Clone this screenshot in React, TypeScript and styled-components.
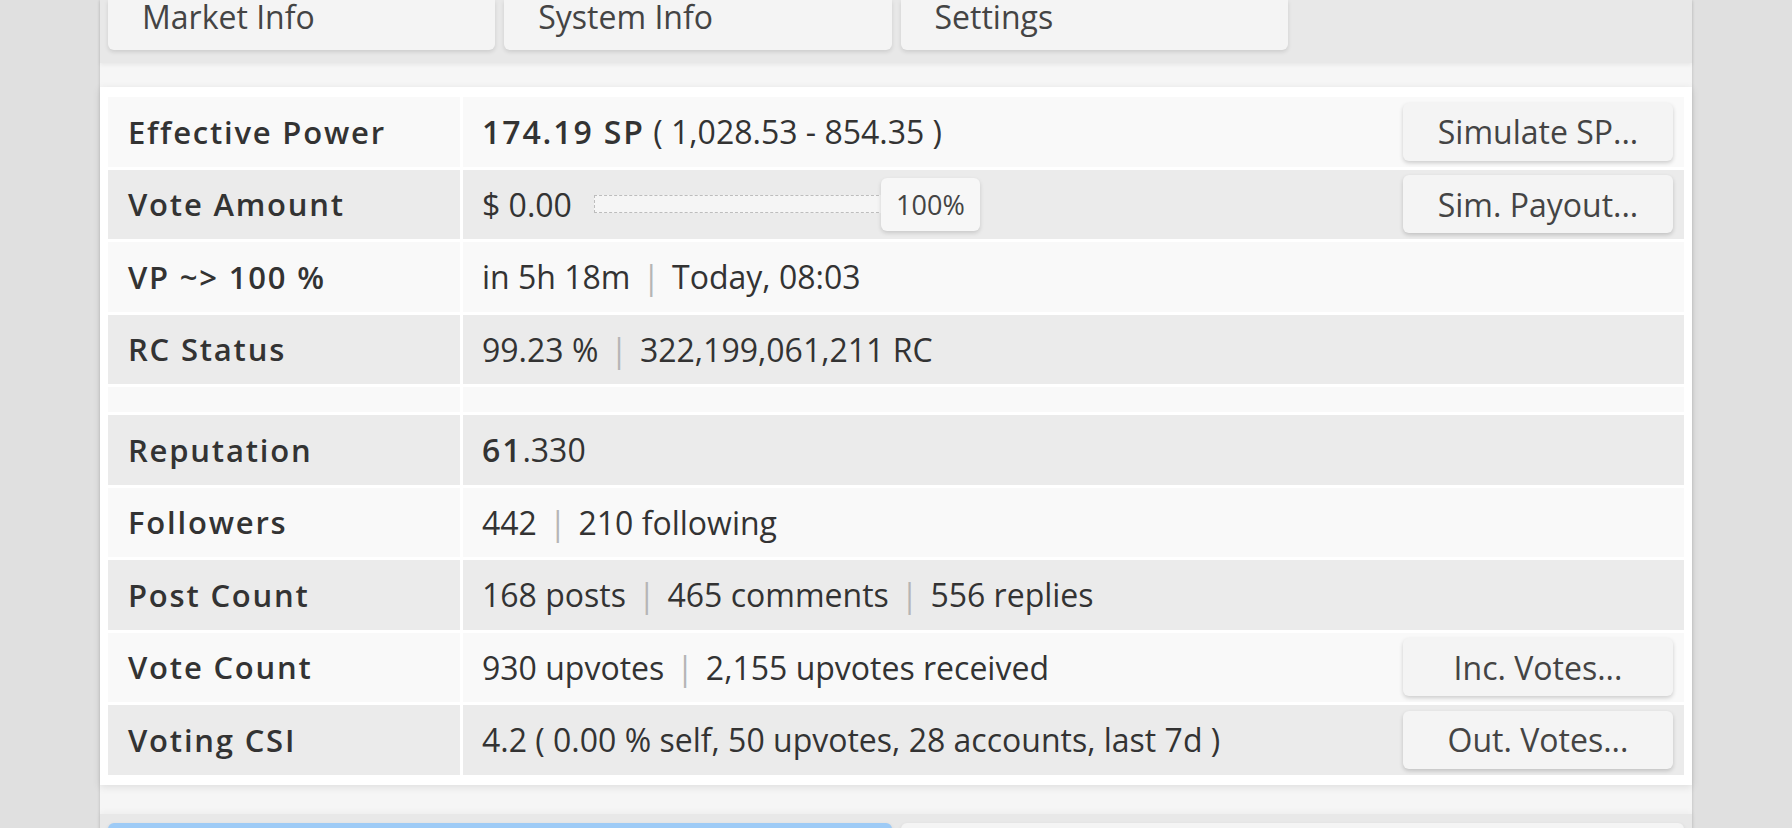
import styled, { createGlobalStyle } from "styled-components";

const GlobalStyle = createGlobalStyle`
	* { box-sizing: border-box; }
	body {
		margin: 0;
		background: #e0e0e0;
		font-family: "Open Sans", "Liberation Sans", sans-serif;
		color: #333;
		overflow: hidden;
	}
`;

const Container = styled.div`
	width: 1592px;
	min-height: 100vh;
	margin: 0 auto;
	background: #f6f6f6;
	box-shadow: 0 0 3px rgba(0, 0, 0, 0.18);
`;

const TabBar = styled.div<{ $cols: number; $top?: boolean }>`
	display: grid;
	grid-template-columns: repeat(${(p) => p.$cols}, 1fr);
	gap: 9px;
	padding: ${(p) => (p.$top ? "0 8px 13px" : "9px 8px 0")};
	background: #e8e8e8;
	box-shadow: ${(p) =>
		p.$top ? "0 2px 4px rgba(0, 0, 0, 0.06)" : "0 -2px 6px rgba(0, 0, 0, 0.04)"};
`;

const Tab = styled.div<{ $top?: boolean; $active?: boolean }>`
	height: ${(p) => (p.$top ? "50px" : "40px")};
	padding: ${(p) => (p.$top ? "1px 34px 0" : "0 34px")};
	font-size: 32px;
	line-height: 32px;
	color: #444;
	background: ${(p) => (p.$active ? "#9ecbf6" : "#f4f4f4")};
	border-radius: ${(p) => (p.$top ? "0 0 6px 6px" : "6px 6px 0 0")};
	box-shadow: 0 2px 4px rgba(0, 0, 0, 0.12);
`;

const Panel = styled.div`
	display: flex;
	flex-direction: column;
	gap: 3px;
	margin: 24px 0 29px;
	padding: 10px 8px;
	background: #fff;
	box-shadow: 0 2px 8px rgba(0, 0, 0, 0.1);
`;

const RowStyled = styled.div<{ $short?: boolean }>`
	display: grid;
	grid-template-columns: 352px 1fr;
	gap: 3px;
	height: ${(p) => (p.$short ? "25px" : "69.5px")};
`;

const Cell = styled.div<{ $dark: boolean }>`
	display: flex;
	align-items: center;
	padding: 0 11px 0 20px;
	background: ${(p) => (p.$dark ? "#ebebeb" : "#f9f9f9")};
`;

const LabelCell = styled(Cell)`
	font-size: 31px;
	font-weight: 600;
	letter-spacing: 1.8px;
	color: #333;
`;

const ValueCell = styled(Cell)`
	justify-content: space-between;
	padding-left: 19px;
	font-size: 32px;
	color: #333;
`;

const ValueText = styled.div`
	display: flex;
	align-items: center;
	white-space: pre;
`;

const Strong = styled.b`
	font-weight: 600;
	letter-spacing: 1.9px;
`;

const SepStyled = styled.span`
	margin: 0 12px;
	color: #b5b5b5;
`;

const Slider = styled.div`
	display: flex;
	align-items: center;
	margin-left: 22px;
`;

const Track = styled.div`
	width: 290px;
	height: 18px;
	border: 1px dashed #bdbdbd;
	background: #f5f5f5;
`;

const Thumb = styled.div`
	margin-left: -3px;
	width: 99px;
	height: 53px;
	display: flex;
	align-items: center;
	justify-content: center;
	font-size: 27px;
	color: #444;
	background: #f7f7f7;
	border-radius: 6px;
	box-shadow: 0 2px 4px rgba(0, 0, 0, 0.15);
`;

const ActionButton = styled.button`
	width: 270px;
	height: 58px;
	border: none;
	border-radius: 6px;
	background: #f4f4f4;
	box-shadow: 0 2px 4px rgba(0, 0, 0, 0.18);
	font-family: "Open Sans", "Liberation Sans", sans-serif;
	font-size: 32px;
	color: #444;
	cursor: pointer;
`;

type Row = {
	label: string;
	value: React.ReactNode;
	action?: string;
};

const Sep = () => <SepStyled>|</SepStyled>;

const getTopRows = (): Row[] => [
	{
		label: "Effective Power",
		value: (
			<>
				<Strong>174.19 SP</Strong> ( 1,028.53 - 854.35 )
			</>
		),
		action: "Simulate SP...",
	},
	{
		label: "Vote Amount",
		value: (
			<>
				$ 0.00
				<Slider>
					<Track />
					<Thumb>100%</Thumb>
				</Slider>
			</>
		),
		action: "Sim. Payout...",
	},
	{
		label: "VP ~> 100 %",
		value: (
			<>
				in 5h 18m<Sep />Today, 08:03
			</>
		),
	},
	{
		label: "RC Status",
		value: (
			<>
				99.23 %<Sep />322,199,061,211 RC
			</>
		),
	},
];

const getBottomRows = (): Row[] => [
	{
		label: "Reputation",
		value: (
			<>
				<Strong>61</Strong>.330
			</>
		),
	},
	{
		label: "Followers",
		value: (
			<>
				442<Sep />210 following
			</>
		),
	},
	{
		label: "Post Count",
		value: (
			<>
				168 posts<Sep />465 comments<Sep />556 replies
			</>
		),
	},
	{
		label: "Vote Count",
		value: (
			<>
				930 upvotes<Sep />2,155 upvotes received
			</>
		),
		action: "Inc. Votes...",
	},
	{
		label: "Voting CSI",
		value: <>4.2 ( 0.00 % self, 50 upvotes, 28 accounts, last 7d )</>,
		action: "Out. Votes...",
	},
];

const InfoRow = ({ row, dark }: { row: Row; dark: boolean }) => (
	<RowStyled>
		<LabelCell $dark={dark}>{row.label}</LabelCell>
		<ValueCell $dark={dark}>
			<ValueText>{row.value}</ValueText>
			{row.action && <ActionButton>{row.action}</ActionButton>}
		</ValueCell>
	</RowStyled>
);

export default function App() {
	const rowsTop = getTopRows();
	const rowsBottom = getBottomRows();
	return (
		<>
			<GlobalStyle />
			<Container>
				<TabBar $cols={4} $top>
					<Tab $top>Market Info</Tab>
					<Tab $top>System Info</Tab>
					<Tab $top>Settings</Tab>
				</TabBar>
				<Panel>
					{rowsTop.map((r, i) => (
						<InfoRow key={r.label} row={r} dark={i % 2 === 1} />
					))}
					<RowStyled $short>
						<LabelCell $dark={false} />
						<ValueCell $dark={false} />
					</RowStyled>
					{rowsBottom.map((r, i) => (
						<InfoRow key={r.label} row={r} dark={i % 2 === 0} />
					))}
				</Panel>
				<TabBar $cols={2}>
					<Tab $active />
					<Tab />
				</TabBar>
			</Container>
		</>
	);
}
